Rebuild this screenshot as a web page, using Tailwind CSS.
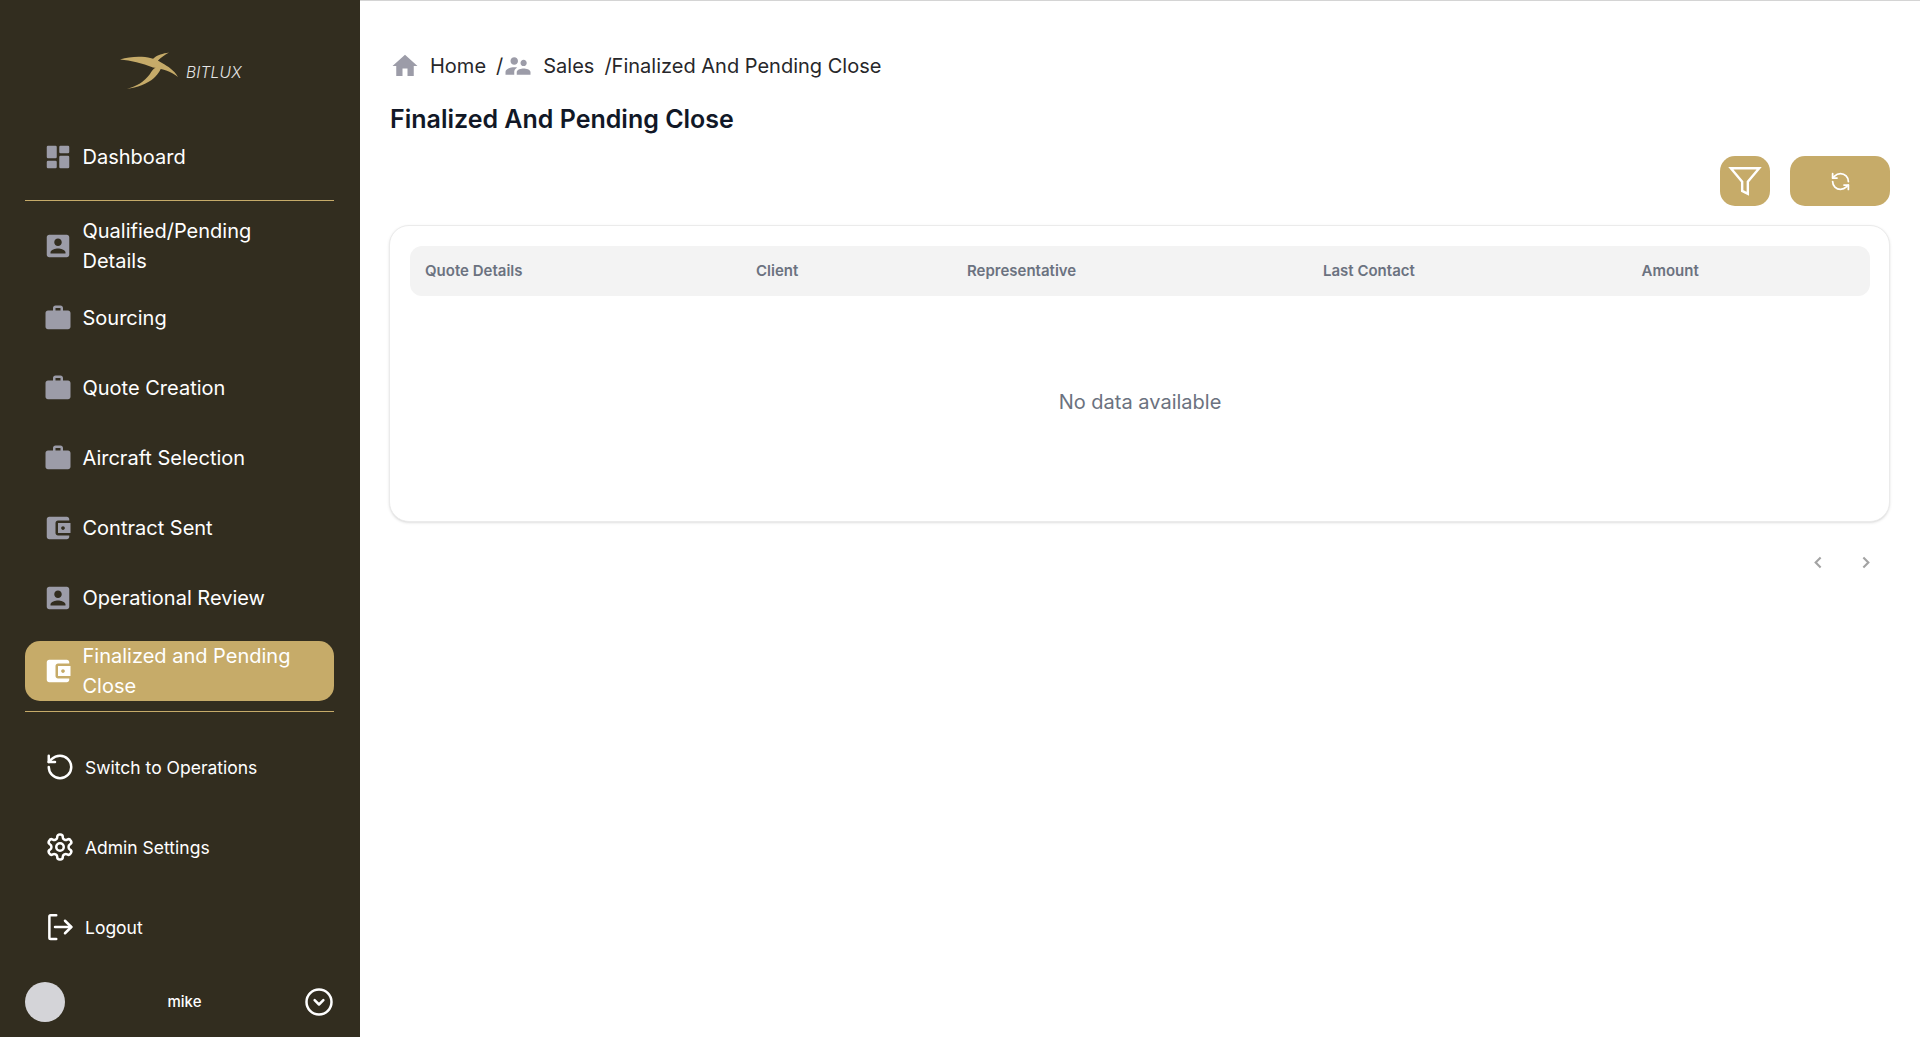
<!DOCTYPE html>
<html lang="en">
<head>
<meta charset="utf-8">
<title>Finalized And Pending Close</title>
<script src="https://cdn.jsdelivr.net/npm/@tailwindcss/browser@4"></script>
</head>
<body class="bg-white font-['Inter',sans-serif]">
<div class="flex h-[1037px] w-[1920px] overflow-hidden">
  <aside class="flex h-full w-[360px] shrink-0 flex-col bg-[#322d1f] pr-[26px] pl-[25px] text-white">
    <div class="flex h-[132px] shrink-0 items-start pt-[52px] pl-[95px]">
      <svg class="h-[38px] w-[60px] shrink-0" viewBox="0 0 60 38" fill="#c6ab69"><path d="M0 7.500C14 3.500 31 3.500 42 11C48 14.500 54 18 58 25C51 19.500 42 16.500 33 15.500C22 11 11 8.500 0 7.500Z"/><path d="M49 0.500C43 1.500 37 3 34 6C31 9 30.500 11 33 13L40 14C35 15 33 17 30 22C24 30 17 34 7 37C17 35.500 27 32 34 26C39 21.500 41 16 43.500 12.500C40 11.500 37.500 10.500 38 8.500C41 5 45 3 49 0.500Z"/></svg>
      <span class="mt-[11px] ml-[6px] text-[15.500px] leading-[20px] font-light tracking-[0.2px] text-[#e5e5e5] italic">BITLUX</span>
    </div>
    <nav class="flex flex-col">
      <a class="flex h-[50px] items-center gap-[9.500px] pl-[18px] text-[20px] leading-[30px]">
        <svg class="h-[30px] w-[30px] shrink-0" viewBox="0 0 24 24" fill="#9c9ca8"><path d="M4 3h6a1 1 0 0 1 1 1v8a1 1 0 0 1-1 1H4a1 1 0 0 1-1-1V4a1 1 0 0 1 1-1zM4 15h6a1 1 0 0 1 1 1v4a1 1 0 0 1-1 1H4a1 1 0 0 1-1-1v-4a1 1 0 0 1 1-1zM14 11h6a1 1 0 0 1 1 1v8a1 1 0 0 1-1 1h-6a1 1 0 0 1-1-1v-8a1 1 0 0 1 1-1zM14 3h6a1 1 0 0 1 1 1v4a1 1 0 0 1-1 1h-6a1 1 0 0 1-1-1V4a1 1 0 0 1 1-1z"/></svg>
        <span>Dashboard</span>
      </a>
      <div class="mt-[18px] h-px bg-[#c6ab69]"></div>
      <a class="mt-[15px] flex h-[60px] items-center gap-[9.500px] pl-[18px] text-[20px] leading-[30px]">
        <svg class="h-[30px] w-[30px] shrink-0" viewBox="0 0 24 24" fill="#9c9ca8"><path d="M19 3H5c-1.100 0-2 .9-2 2v14c0 1.100.9 2 2 2h14c1.100 0 2-.9 2-2V5c0-1.100-.9-2-2-2zm-7 3c1.650 0 3 1.350 3 3s-1.350 3-3 3-3-1.350-3-3 1.350-3 3-3zm6 12H6v-1c0-2 4-3.100 6-3.100s6 1.100 6 3.100v1z"/></svg>
        <span>Qualified/Pending<br>Details</span>
      </a>
      <a class="mt-[17px] flex h-[50px] items-center gap-[9.500px] pl-[18px] text-[20px] leading-[30px]">
        <svg class="h-[30px] w-[30px] shrink-0" viewBox="0 0 24 24" fill="#9c9ca8"><path d="M20 6h-4V4c0-1.110-.89-2-2-2h-4c-1.110 0-2 .89-2 2v2H4c-1.110 0-1.990.89-1.990 2L2 19c0 1.110.89 2 2 2h16c1.110 0 2-.89 2-2V8c0-1.110-.89-2-2-2zm-6 0h-4V4h4v2z"/></svg>
        <span>Sourcing</span>
      </a>
      <a class="mt-[20px] flex h-[50px] items-center gap-[9.500px] pl-[18px] text-[20px] leading-[30px]">
        <svg class="h-[30px] w-[30px] shrink-0" viewBox="0 0 24 24" fill="#9c9ca8"><path d="M20 6h-4V4c0-1.110-.89-2-2-2h-4c-1.110 0-2 .89-2 2v2H4c-1.110 0-1.990.89-1.990 2L2 19c0 1.110.89 2 2 2h16c1.110 0 2-.89 2-2V8c0-1.110-.89-2-2-2zm-6 0h-4V4h4v2z"/></svg>
        <span>Quote Creation</span>
      </a>
      <a class="mt-[20px] flex h-[50px] items-center gap-[9.500px] pl-[18px] text-[20px] leading-[30px]">
        <svg class="h-[30px] w-[30px] shrink-0" viewBox="0 0 24 24" fill="#9c9ca8"><path d="M20 6h-4V4c0-1.110-.89-2-2-2h-4c-1.110 0-2 .89-2 2v2H4c-1.110 0-1.990.89-1.990 2L2 19c0 1.110.89 2 2 2h16c1.110 0 2-.89 2-2V8c0-1.110-.89-2-2-2zm-6 0h-4V4h4v2z"/></svg>
        <span>Aircraft Selection</span>
      </a>
      <a class="mt-[20px] flex h-[50px] items-center gap-[9.500px] pl-[18px] text-[20px] leading-[30px]">
        <svg class="h-[30px] w-[30px] shrink-0" viewBox="0 0 24 24" fill="#9c9ca8"><path d="M21 18v1c0 1.100-.9 2-2 2H5c-1.110 0-2-.9-2-2V5c0-1.100.89-2 2-2h14c1.100 0 2 .9 2 2v1h-9c-1.110 0-2 .9-2 2v8c0 1.100.89 2 2 2h9zm-9-2h10V8H12v8zm4-2.500c-.83 0-1.500-.67-1.500-1.500s.67-1.500 1.500-1.500 1.500.67 1.500 1.500-.67 1.500-1.500 1.500z"/></svg>
        <span>Contract Sent</span>
      </a>
      <a class="mt-[20px] flex h-[50px] items-center gap-[9.500px] pl-[18px] text-[20px] leading-[30px]">
        <svg class="h-[30px] w-[30px] shrink-0" viewBox="0 0 24 24" fill="#9c9ca8"><path d="M19 3H5c-1.100 0-2 .9-2 2v14c0 1.100.9 2 2 2h14c1.100 0 2-.9 2-2V5c0-1.100-.9-2-2-2zm-7 3c1.650 0 3 1.350 3 3s-1.350 3-3 3-3-1.350-3-3 1.350-3 3-3zm6 12H6v-1c0-2 4-3.100 6-3.100s6 1.100 6 3.100v1z"/></svg>
        <span>Operational Review</span>
      </a>
      <a class="mt-[18px] flex h-[60px] items-center gap-[9.500px] rounded-[15px] bg-[#c6ab69] pl-[18px] text-[20px] leading-[30px]">
        <svg class="h-[30px] w-[30px] shrink-0" viewBox="0 0 24 24" fill="#ffffff"><path d="M21 18v1c0 1.100-.9 2-2 2H5c-1.110 0-2-.9-2-2V5c0-1.100.89-2 2-2h14c1.100 0 2 .9 2 2v1h-9c-1.110 0-2 .9-2 2v8c0 1.100.89 2 2 2h9zm-9-2h10V8H12v8zm4-2.500c-.83 0-1.500-.67-1.500-1.500s.67-1.500 1.500-1.500 1.500.67 1.500 1.500-.67 1.500-1.500 1.500z"/></svg>
        <span>Finalized and Pending<br>Close</span>
      </a>
      <div class="mt-[10px] h-px bg-[#c6ab69]"></div>
      <a class="mt-[30px] flex h-[50px] items-center gap-[10px] pl-[20px] text-[17.500px]">
        <svg class="h-[30px] w-[30px] shrink-0" viewBox="0 0 24 24" fill="none" stroke="#ffffff" stroke-width="2" stroke-linecap="round" stroke-linejoin="round"><path d="M3 12a9 9 0 1 0 9-9 9.750 9.750 0 0 0-6.740 2.740L3 8"/><path d="M3 3v5h5"/></svg>
        <span class="mt-[2px]">Switch to Operations</span>
      </a>
      <a class="mt-[30px] flex h-[50px] items-center gap-[10px] pl-[20px] text-[17.500px]">
        <svg class="h-[30px] w-[30px] shrink-0" viewBox="0 0 24 24" fill="none" stroke="#ffffff" stroke-width="2" stroke-linecap="round" stroke-linejoin="round"><path d="M12.220 2h-.44a2 2 0 0 0-2 2v.18a2 2 0 0 1-1 1.730l-.43.25a2 2 0 0 1-2 0l-.15-.08a2 2 0 0 0-2.730.73l-.22.38a2 2 0 0 0 .73 2.730l.15.1a2 2 0 0 1 1 1.720v.51a2 2 0 0 1-1 1.740l-.15.09a2 2 0 0 0-.73 2.730l.22.38a2 2 0 0 0 2.730.73l.15-.08a2 2 0 0 1 2 0l.43.25a2 2 0 0 1 1 1.730V20a2 2 0 0 0 2 2h.44a2 2 0 0 0 2-2v-.18a2 2 0 0 1 1-1.730l.43-.25a2 2 0 0 1 2 0l.15.08a2 2 0 0 0 2.730-.73l.22-.39a2 2 0 0 0-.73-2.730l-.15-.08a2 2 0 0 1-1-1.740v-.5a2 2 0 0 1 1-1.740l.15-.09a2 2 0 0 0 .73-2.730l-.22-.38a2 2 0 0 0-2.730-.73l-.15.08a2 2 0 0 1-2 0l-.43-.25a2 2 0 0 1-1-1.730V4a2 2 0 0 0-2-2z"/><circle cx="12" cy="12" r="3"/></svg>
        <span class="mt-[2px]">Admin Settings</span>
      </a>
      <a class="mt-[30px] flex h-[50px] items-center gap-[10px] pl-[20px] text-[17.500px]">
        <svg class="h-[30px] w-[30px] shrink-0" viewBox="0 0 24 24" fill="none" stroke="#ffffff" stroke-width="2" stroke-linecap="round" stroke-linejoin="round"><path d="M9 2.500H4.500a1 1 0 0 0-1 1v17a1 1 0 0 0 1 1H9"/><path d="M8 12h13"/><path d="M16 7l5 5-5 5"/></svg>
        <span class="mt-[2px]">Logout</span>
      </a>
    </nav>
    <div class="mt-[30px] flex h-[40px] items-center">
      <div class="h-[40px] w-[40px] shrink-0 rounded-full bg-[#d4d4d8]"></div>
      <span class="flex-1 text-center text-[15px] font-medium">mike</span>
      <svg class="h-[30px] w-[30px] shrink-0" viewBox="0 0 24 24" fill="none" stroke="#ffffff" stroke-width="2" stroke-linecap="round" stroke-linejoin="round"><circle cx="12" cy="12" r="10"/><path d="M8.500 10.500l3.500 3.500 3.500-3.500"/></svg>
    </div>
  </aside>
  <main class="min-w-0 flex-1 border-t border-[#d4d4d4] pr-[30px] pl-[30px] text-[#1f2937]">
    <div class="mt-[50px] flex h-[30px] items-center text-[20px] text-[#27272a]">
      <svg class="h-[30px] w-[30px] shrink-0" viewBox="0 0 24 24" fill="#9c9ca8"><path d="M10 20v-6h4v6h5v-8h3L12 3 2 12h3v8z"/></svg>
      <span class="ml-[10px]">Home</span>
      <span class="ml-[10px]">/</span>
      <svg class="h-[30px] w-[30px] shrink-0" viewBox="0 0 24 24" fill="#9c9ca8"><path d="M16.500 12c1.380 0 2.490-1.120 2.490-2.500S17.880 7 16.500 7C15.120 7 14 8.120 14 9.500s1.120 2.500 2.500 2.500zM9 11c1.660 0 2.990-1.340 2.990-3S10.660 5 9 5C7.340 5 6 6.340 6 8s1.340 3 3 3zm7.500 3c-1.830 0-5.500.92-5.500 2.750V19h11v-2.250c0-1.830-3.670-2.750-5.500-2.750zM9 13c-2.330 0-7 1.170-7 3.500V19h7v-2.250c0-.85.33-2.340 2.370-3.470C10.500 13.100 9.660 13 9 13z"/></svg>
      <span class="ml-[10px]">Sales</span>
      <span class="ml-[10px]">/Finalized And Pending Close</span>
    </div>
    <h1 class="mt-[22px] text-[25px] leading-[32px] font-semibold text-[#111827]">Finalized And Pending Close</h1>
    <div class="mt-[21px] flex justify-end gap-[20px]">
      <button class="flex h-[50px] w-[50px] items-center justify-center rounded-[15px] bg-[#c6ab69]">
        <svg class="h-[34px] w-[34px]" viewBox="0 0 24 24" fill="none" stroke="#ffffff" stroke-width="1.700" stroke-linejoin="miter"><path d="M22 3H2l8 9.460V19l4 2v-8.540L22 3z"/></svg>
      </button>
      <button class="flex h-[50px] w-[100px] items-center justify-center rounded-[15px] bg-[#c6ab69]">
        <svg class="h-[21px] w-[21px]" viewBox="0 0 24 24" fill="none" stroke="#ffffff" stroke-width="2" stroke-linecap="round" stroke-linejoin="round"><path d="M21 12a9 9 0 0 0-9-9 9.750 9.750 0 0 0-6.740 2.740L3 8"/><path d="M3 3v5h5"/><path d="M3 12a9 9 0 0 0 9 9 9.750 9.750 0 0 0 6.740-2.740L21 16"/><path d="M16 16h5v5"/></svg>
      </button>
    </div>
    <section class="mt-[19px] -ml-px h-[297px] rounded-[20px] border border-[#ebebeb] bg-white px-[19px] pt-[20px] pl-[20px] shadow-sm">
      <div class="grid h-[50px] grid-cols-[331px_211px_356px_318.500px_1fr] items-center rounded-[12px] bg-[#f3f3f3] px-[15px] text-[15px] font-semibold text-[#6b7280]">
        <span>Quote Details</span>
        <span>Client</span>
        <span>Representative</span>
        <span>Last Contact</span>
        <span>Amount</span>
      </div>
      <div class="flex h-[212px] items-center justify-center text-[20px] text-[#6b7280]">No data available</div>
    </section>
    <div class="mt-[26px] flex h-[30px] justify-end gap-[30px] pr-[16px]">
      <svg class="h-[17px] w-[17px] translate-y-[6px]" viewBox="0 0 24 24" fill="none" stroke="#a3a3a3" stroke-width="3"><path d="M15 5l-7 7 7 7"/></svg>
      <svg class="h-[17px] w-[17px] translate-y-[6px]" viewBox="0 0 24 24" fill="none" stroke="#a3a3a3" stroke-width="3"><path d="M9 5l7 7-7 7"/></svg>
    </div>
  </main>
</div>
</body>
</html>
